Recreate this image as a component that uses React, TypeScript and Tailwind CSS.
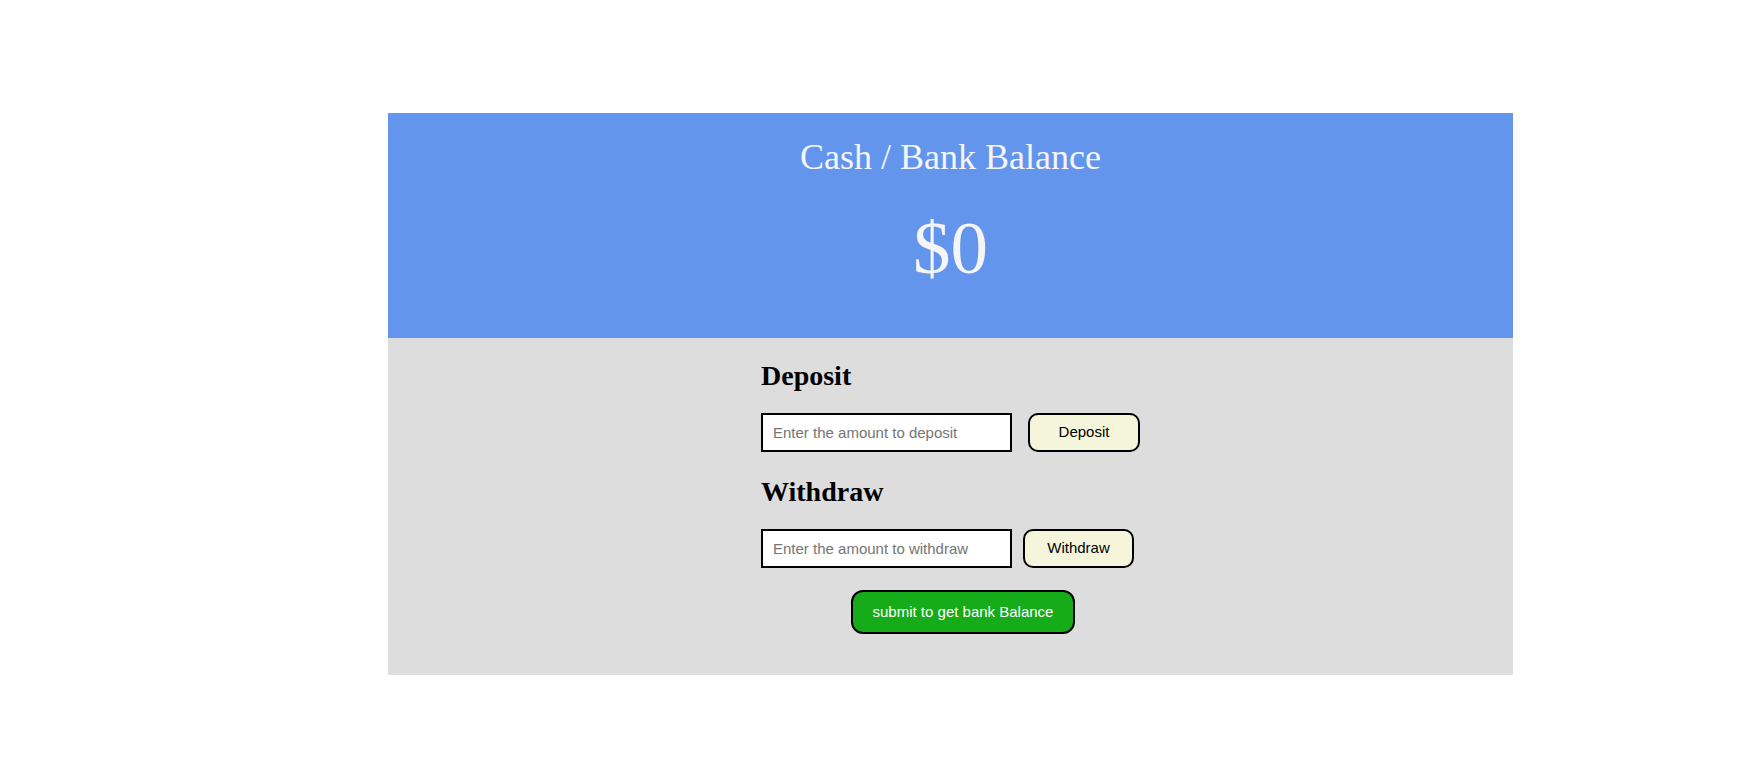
export default function App() {
  return (
    <div className="min-h-screen bg-white pt-[113px]">
      <div className="ml-[388px] w-[1125px]">
        {/* Balance header */}
        <div className="flex h-[225px] flex-col items-center bg-[#6495ed] pt-[24px] text-[#f5f5f5] [font-family:'Liberation_Serif',serif]">
          <h1 className="text-[36px] leading-[40px]">Cash / Bank Balance</h1>
          <div className="mt-[29px] text-[75px] leading-[83px]">$0</div>
        </div>

        {/* Actions */}
        <div className="h-[337px] bg-[#dddddd] pt-[22px]">
          <div className="ml-[373px] flex flex-col items-start">
            <h2 className="text-[28px] font-bold leading-[31px] text-black [font-family:'Liberation_Serif',serif]">
              Deposit
            </h2>
            <div className="mt-[22px] flex items-center">
              <input
                type="text"
                placeholder="Enter the amount to deposit"
                className="h-[39px] w-[251px] border-2 border-black bg-white px-[10px] text-[15px] text-black outline-none placeholder:text-[#757575] [font-family:'Liberation_Sans',sans-serif]"
              />
              <button className="ml-[16px] h-[39px] w-[112px] rounded-[10px] border-2 border-black bg-[#f5f5dc] text-[15px] text-black [font-family:'Liberation_Sans',sans-serif]">
                Deposit
              </button>
            </div>

            <h2 className="mt-[24px] text-[28px] font-bold leading-[31px] text-black [font-family:'Liberation_Serif',serif]">
              Withdraw
            </h2>
            <div className="mt-[22px] flex items-center">
              <input
                type="text"
                placeholder="Enter the amount to withdraw"
                className="h-[39px] w-[251px] border-2 border-black bg-white px-[10px] text-[15px] text-black outline-none placeholder:text-[#757575] [font-family:'Liberation_Sans',sans-serif]"
              />
              <button className="ml-[11px] h-[39px] w-[111px] rounded-[10px] border-2 border-black bg-[#f5f5dc] text-[15px] text-black [font-family:'Liberation_Sans',sans-serif]">
                Withdraw
              </button>
            </div>

            <button className="ml-[90px] mt-[22px] h-[44px] w-[224px] rounded-[12px] border-2 border-black bg-[#16ab18] text-[15px] text-white [font-family:'Liberation_Sans',sans-serif]">
              submit to get bank Balance
            </button>
          </div>
        </div>
      </div>
    </div>
  )
}
